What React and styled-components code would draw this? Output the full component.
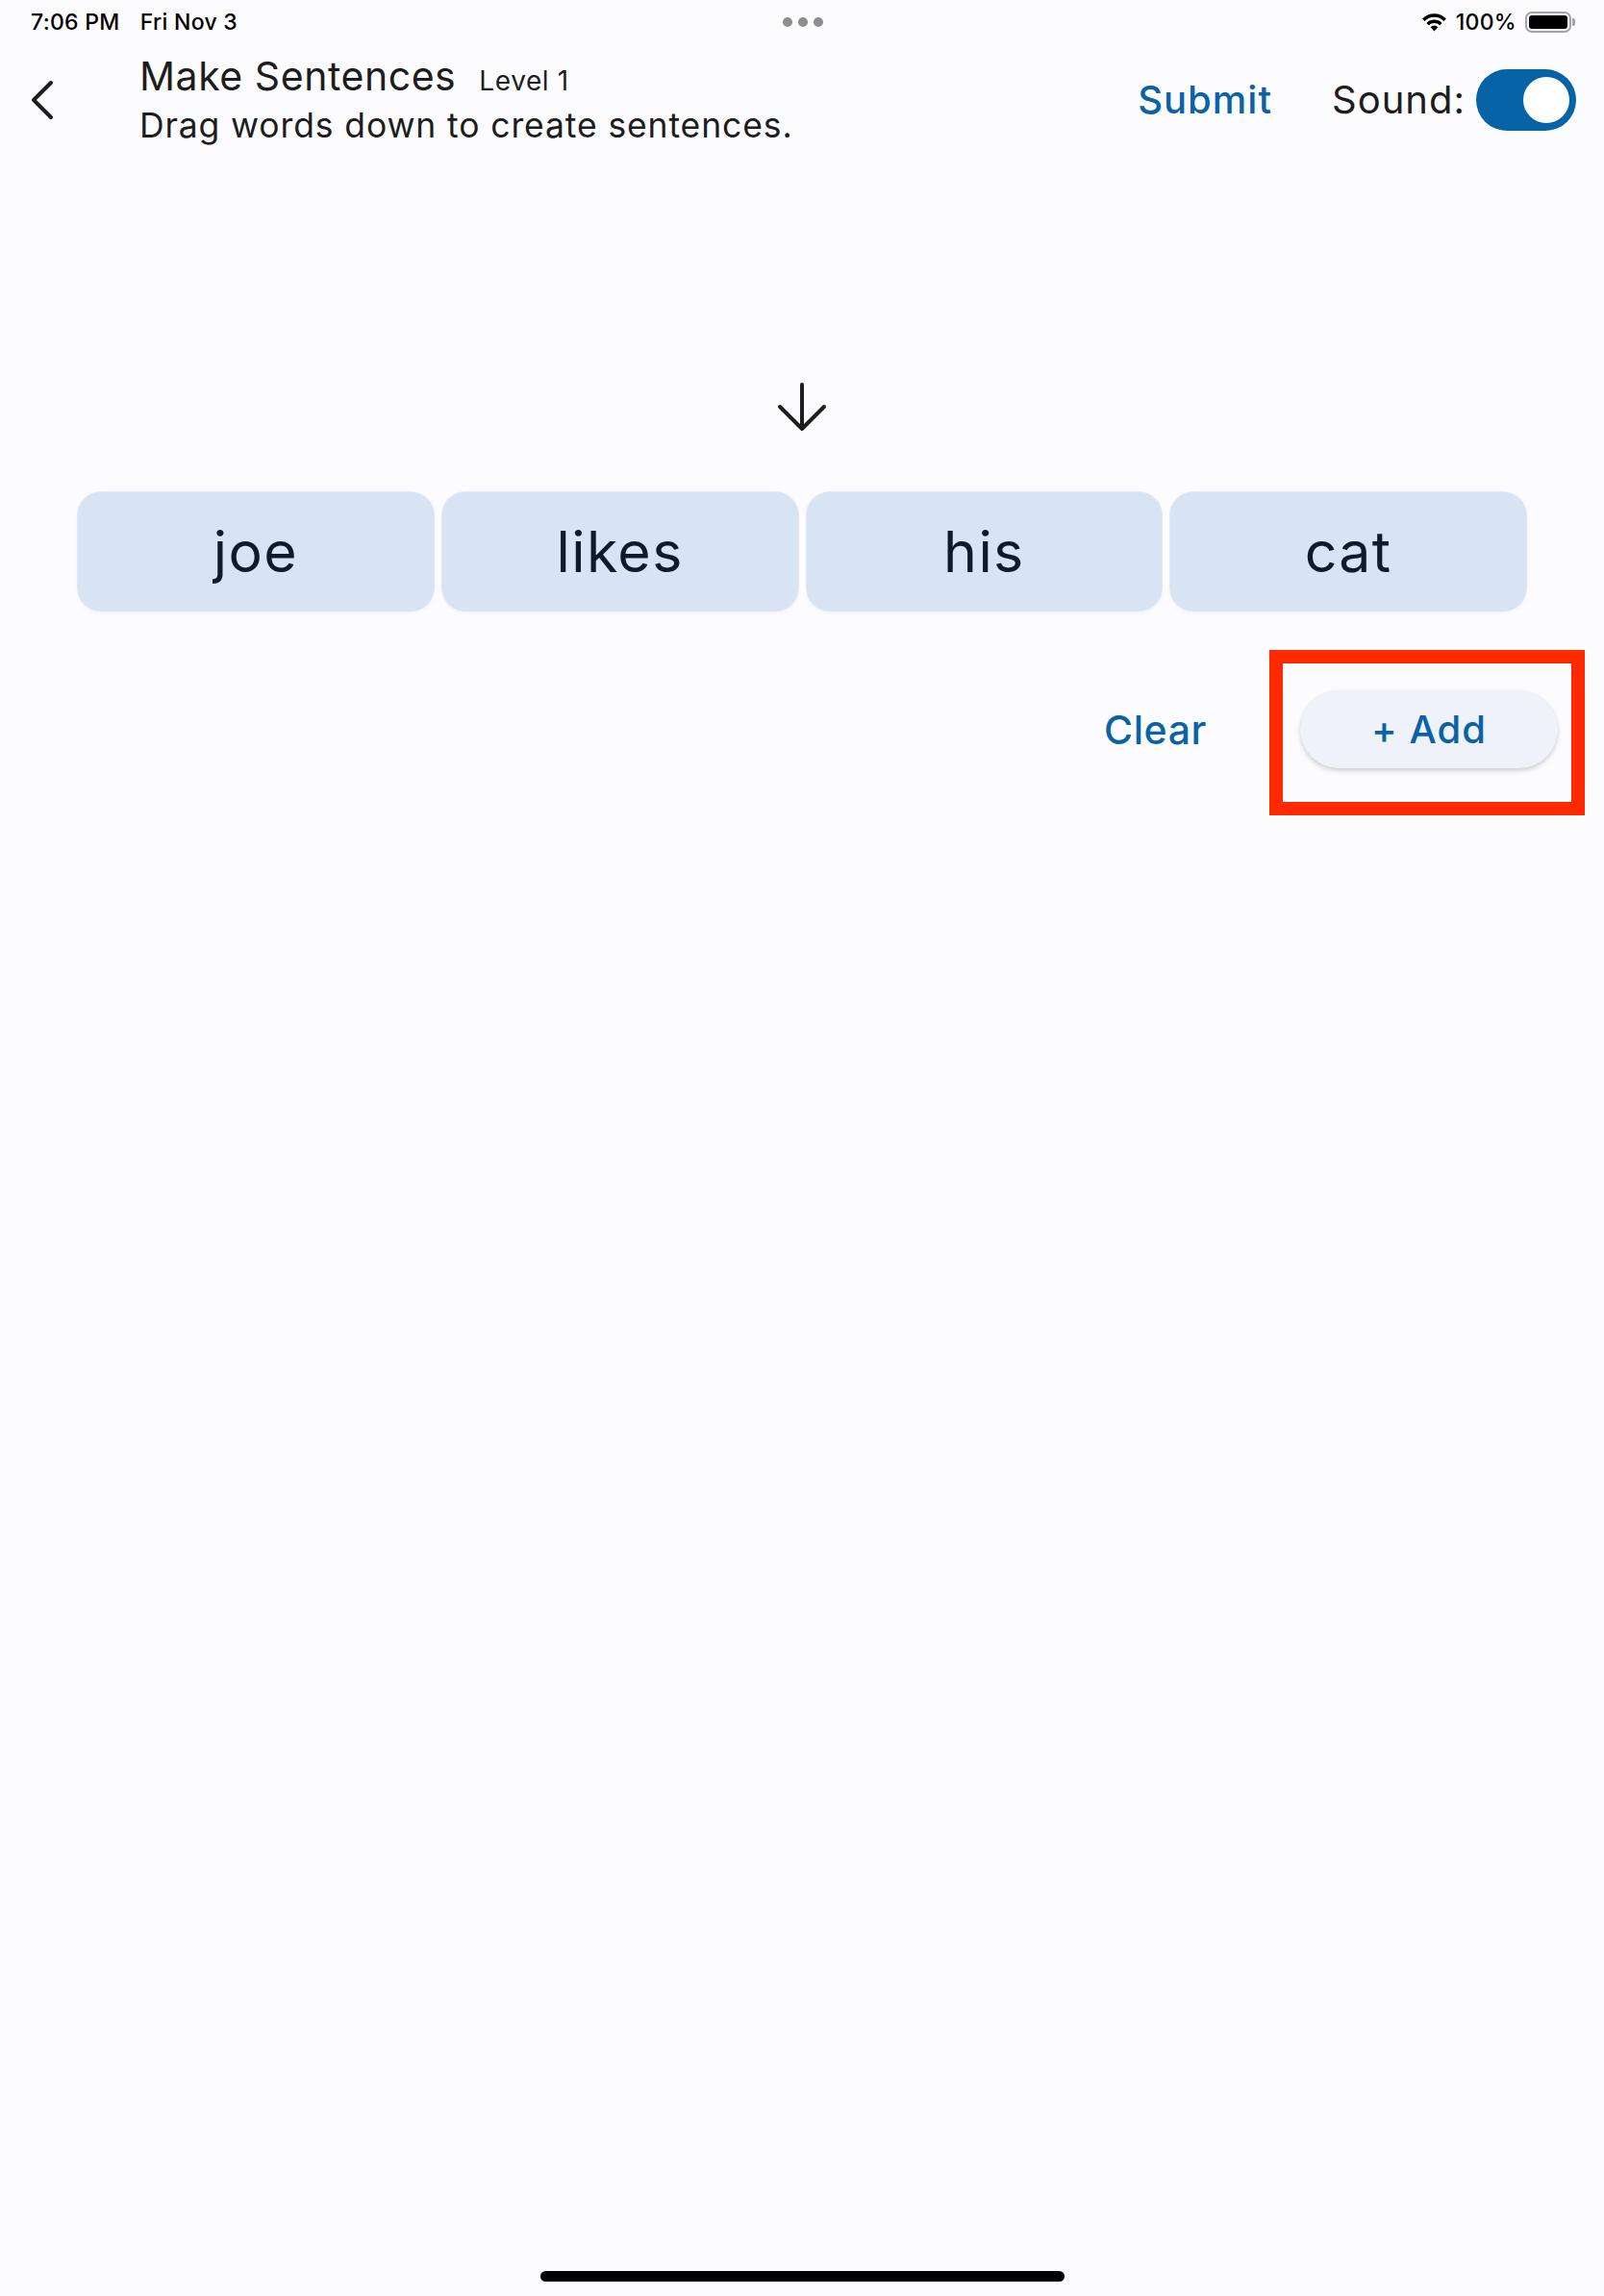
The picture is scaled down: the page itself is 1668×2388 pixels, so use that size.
import React from 'react';
import styled, { createGlobalStyle } from 'styled-components';

const BLUE = '#0b63a5';
const INK = '#1d1d20';

const GlobalStyle = createGlobalStyle`
  html, body {
    margin: 0;
    padding: 0;
    background: #fcfcfe;
  }
  body {
    font-family: Inter, "Noto Sans", "Liberation Sans", sans-serif;
    color: ${INK};
  }
`;

const Page = styled.div`
  min-height: 100vh;
  display: flex;
  flex-direction: column;
  background: #fcfcfe;
`;

const StatusBar = styled.div`
  height: 46px;
  display: grid;
  grid-template-columns: 1fr auto 1fr;
  align-items: center;
  padding: 0 30px 0 32px;
  font-size: 23px;
  font-weight: 500;
  letter-spacing: 0.3px;
  color: #000;
`;

const StatusLeft = styled.div`
  display: flex;
  align-items: center;
  gap: 21px;
`;

const StatusRight = styled.div`
  display: flex;
  align-items: center;
  justify-content: flex-end;
  gap: 9px;
`;

const Dots = styled.div`
  display: flex;
  gap: 6px;
`;

const Dot = styled.span`
  width: 10px;
  height: 10px;
  border-radius: 50%;
  background: #8e8e93;
`;

const Battery = styled.div`
  display: flex;
  align-items: center;
  gap: 1px;
`;

const BatteryBody = styled.div`
  width: 48px;
  height: 22px;
  box-sizing: border-box;
  border: 2px solid #a4a4a8;
  border-radius: 7px;
  padding: 2px;
`;

const BatteryFill = styled.div`
  width: 100%;
  height: 100%;
  background: #000;
  border-radius: 3px;
`;

const BatteryNub = styled.div`
  width: 3px;
  height: 8px;
  background: #a4a4a8;
  border-radius: 0 2px 2px 0;
`;

const Header = styled.header`
  display: flex;
  align-items: center;
  padding: 9px 29px 0 32px;
`;

const BackButton = styled.button`
  width: 113px;
  height: 44px;
  padding: 0;
  border: none;
  background: none;
  display: flex;
  align-items: center;
  color: ${INK};
`;

const TitleBlock = styled.div`
  flex: 1;
`;

const TitleRow = styled.div`
  display: flex;
  align-items: baseline;
`;

const Title = styled.h1`
  margin: 0;
  font-size: 41px;
  line-height: 49px;
  font-weight: 400;
  letter-spacing: 0.55px;
`;

const Level = styled.span`
  margin-left: 24px;
  font-size: 28px;
  letter-spacing: 0.6px;
`;

const Subtitle = styled.p`
  margin: 6px 0 0;
  font-size: 35.5px;
  line-height: 42px;
  letter-spacing: 0.88px;
`;

const HeaderActions = styled.div`
  display: flex;
  align-items: center;
`;

const TextButton = styled.button`
  border: none;
  background: none;
  padding: 0;
  font-family: inherit;
  font-size: ${p => p.size || 40}px;
  font-weight: 500;
  letter-spacing: ${p => p.tracking ?? 0.8}px;
  color: ${BLUE};
`;

const SoundLabel = styled.span`
  margin-left: 62px;
  margin-right: 11px;
  font-size: 40px;
  letter-spacing: 1px;
`;

const Toggle = styled.div`
  width: 104px;
  height: 64px;
  box-sizing: border-box;
  border-radius: 32px;
  background: #0563a6;
  display: flex;
  align-items: center;
  justify-content: ${p => (p.on ? 'flex-end' : 'flex-start')};
  padding: 0 7px;
`;

const Knob = styled.span`
  width: 48px;
  height: 48px;
  border-radius: 50%;
  background: #fff;
`;

const Main = styled.main`
  display: flex;
  flex-direction: column;
  align-items: center;
  padding-top: 246px;
`;

const WordRow = styled.div`
  margin-top: 62px;
  width: 1506px;
  display: grid;
  grid-template-columns: repeat(4, 1fr);
  gap: 9px;
`;

const WordTile = styled.div`
  height: 123px;
  border-radius: 24px;
  background: #d8e3f4;
  box-shadow: 0 0 0 1px rgba(214, 222, 244, 0.7), 0 2px 3px rgba(200, 205, 235, 0.25);
  display: flex;
  align-items: center;
  justify-content: center;
  font-size: 59px;
  letter-spacing: 1.4px;
  color: #0f1b2c;
`;

const ActionRow = styled.div`
  align-self: stretch;
  margin-top: 83px;
  padding-right: 48px;
  display: flex;
  justify-content: flex-end;
  align-items: center;
  gap: 97px;
`;

const AddWrap = styled.div`
  position: relative;
`;

const AddButton = styled.button`
  width: 268px;
  height: 81px;
  border: none;
  border-radius: 41px;
  background: #eff3f9;
  box-shadow: 0 3px 5px rgba(0, 0, 0, 0.16), 0 0 1px rgba(0, 0, 0, 0.08);
  font-family: inherit;
  font-size: 40px;
  font-weight: 500;
  letter-spacing: 1px;
  color: ${BLUE};
`;

const Highlight = styled.div`
  position: absolute;
  top: -42px;
  left: -32px;
  right: -28px;
  bottom: -49px;
  border: 14px solid #ff2a00;
  pointer-events: none;
`;

const HomeIndicator = styled.div`
  margin: auto auto 15px;
  width: 545px;
  height: 11px;
  border-radius: 6px;
  background: #000;
`;

const WifiIcon = () => (
  <svg width="27" height="19" viewBox="0 0 27 19">
    <path d="M13.5 18.5 L9.6 14.2 A5.6 5.6 0 0 1 17.4 14.2 Z" fill="#000" />
    <path d="M6.6 11.1 A9.8 9.8 0 0 1 20.4 11.1" stroke="#000" strokeWidth="3.4" fill="none" />
    <path d="M2.3 6.8 A15.6 15.6 0 0 1 24.7 6.8" stroke="#000" strokeWidth="3.4" fill="none" />
  </svg>
);

const BackIcon = () => (
  <svg width="26" height="42" viewBox="0 0 26 42">
    <path d="M21 3 L3 21 L21 39" stroke="currentColor" strokeWidth="4" fill="none" strokeLinecap="round" strokeLinejoin="round" />
  </svg>
);

const ArrowDown = () => (
  <svg width="52" height="52" viewBox="0 0 52 52">
    <path d="M26 2 V48 M3 25 L26 48 L49 25" stroke="#1d1d20" strokeWidth="4" fill="none" strokeLinecap="round" strokeLinejoin="round" />
  </svg>
);

const words = ['joe', 'likes', 'his', 'cat'];

const App = () => {
  return (
    <Page>
      <GlobalStyle />
      <StatusBar>
        <StatusLeft>
          <span>7:06 PM</span>
          <span>Fri Nov 3</span>
        </StatusLeft>
        <Dots>
          <Dot />
          <Dot />
          <Dot />
        </Dots>
        <StatusRight>
          <WifiIcon />
          <span>100%</span>
          <Battery>
            <BatteryBody>
              <BatteryFill />
            </BatteryBody>
            <BatteryNub />
          </Battery>
        </StatusRight>
      </StatusBar>

      <Header>
        <BackButton aria-label="Back">
          <BackIcon />
        </BackButton>
        <TitleBlock>
          <TitleRow>
            <Title>Make Sentences</Title>
            <Level>Level 1</Level>
          </TitleRow>
          <Subtitle>Drag words down to create sentences.</Subtitle>
        </TitleBlock>
        <HeaderActions>
          <TextButton size={40} tracking={1}>Submit</TextButton>
          <SoundLabel>Sound:</SoundLabel>
          <Toggle on>
            <Knob />
          </Toggle>
        </HeaderActions>
      </Header>

      <Main>
        <ArrowDown />
        <WordRow>
          {words.map(w => (
            <WordTile key={w}>{w}</WordTile>
          ))}
        </WordRow>
        <ActionRow>
          <TextButton size={41} tracking={0.6}>Clear</TextButton>
          <AddWrap>
            <AddButton>+ Add</AddButton>
            <Highlight />
          </AddWrap>
        </ActionRow>
      </Main>

      <HomeIndicator />
    </Page>
  );
};

export default App;
